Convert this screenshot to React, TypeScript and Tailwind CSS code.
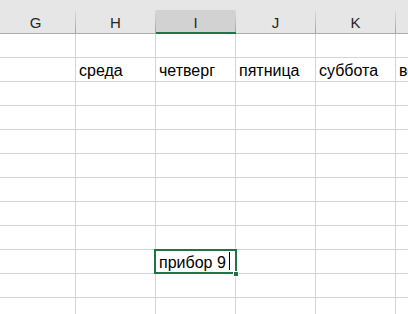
import clsx from 'clsx'

const columns = ['G', 'H', 'I', 'J', 'K', 'L']
const selectedCol = 2

// 12 visible rows, row 2 holds the week days, row 10 has the cell being edited
const rows: string[][] = Array.from({ length: 12 }, () => Array(6).fill(''))
rows[1] = ['', 'среда', 'четверг', 'пятница', 'суббота', 'воскресенье']
rows[9] = ['', '', 'прибор 9', '', '', '']

const editRow = 9

export default function App() {
  return (
    <div className="h-[314px] w-[408px] overflow-hidden bg-white font-['Liberation_Sans',Arial,sans-serif] text-black">
      <div className="h-[10px] bg-[#e6e6e6]" />

      {/* Column headers */}
      <div className="-ml-[4px] flex h-[24px] bg-[#e6e6e6]">
        {columns.map((col, i) => (
          <div
            key={col}
            className={clsx(
              'box-border flex h-[24px] w-[80px] shrink-0',
              i === selectedCol
                ? 'border-b-2 border-[#217346] bg-[#d2d2d2]'
                : 'border-b border-[#ababab]'
            )}
          >
            <div className="flex-1 pt-[3px] text-center text-[15px] leading-[20px] text-[#262626]">
              {col}
            </div>
            <div className="w-px bg-linear-to-b from-[#dedede] to-[#a2a2a2]" />
          </div>
        ))}
      </div>

      {/* Grid */}
      {rows.map((row, r) => (
        <div key={r} className="-ml-[4px] flex h-[24px]">
          {row.map((text, c) => {
            const editing = r === editRow && c === selectedCol
            return (
              <div
                key={c}
                className={clsx(
                  'box-border flex h-[24px] w-[80px] shrink-0 items-end whitespace-nowrap border-b border-r border-[#d4d4d4] pl-[3px] text-[16px] leading-[20px]',
                  editing && 'relative'
                )}
              >
                {text}
                {editing && (
                  <>
                    <div className="absolute -left-[2px] -top-[1px] z-10 box-border h-[25px] w-[83px] border-2 border-[#217346]" />
                    <div className="absolute left-[73px] top-[2px] z-10 h-[18px] w-px bg-black" />
                    <div className="absolute left-[77px] top-[21px] z-20 box-border h-[6px] w-[6px] border border-white bg-[#217346]" />
                  </>
                )}
              </div>
            )
          })}
        </div>
      ))}
    </div>
  )
}
